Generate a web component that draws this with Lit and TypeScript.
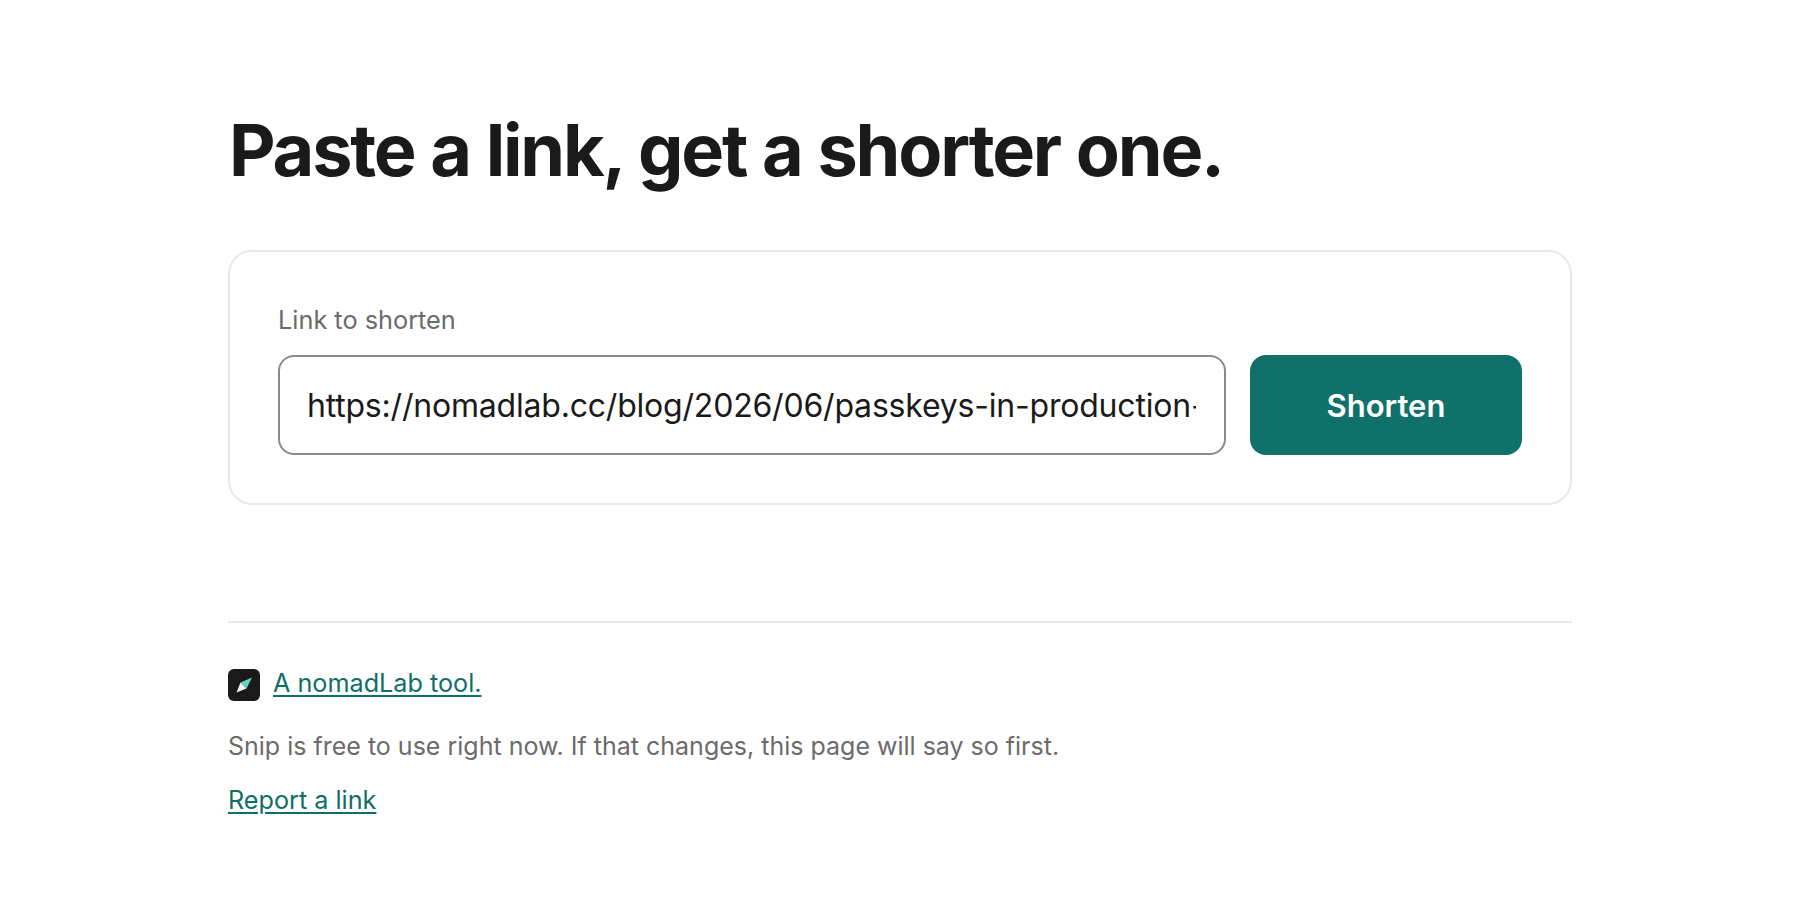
import { LitElement, html, css } from "lit";
import { customElement } from "lit/decorators.js";

@customElement("app-root")
export class AppRoot extends LitElement {
  static styles = css`
    :host { display: block; background: #fff; min-height: 920px; font-family: Inter, "Noto Sans", sans-serif; color: #1a1a1a; }
    .page { width: 1344px; margin: 0 auto; padding-top: 108px; box-sizing: border-box; }
    h1 { margin: 0 0 58px; font-size: 72px; line-height: 84px; font-weight: 700; letter-spacing: -2.2px; word-spacing: 1px; padding-left: 1px; color: #1a1a1a; }
    .card { border: 2px solid #e8e8e8; border-radius: 24px; padding: 48px; display: flex; flex-direction: column; gap: 16px; }
    label { font-size: 25.3px; line-height: 39px; color: #6b6b6b; }
    .row { display: flex; gap: 24px; }
    input { flex: 1; min-width: 0; height: 100px; box-sizing: border-box; border: 2px solid #8a8a8a; border-radius: 16px; padding: 0 28px 0 27px; font: 400 32px Inter, sans-serif; letter-spacing: -0.2px; color: #1a1a1a; background: #fff; outline: none; }
    button { width: 272px; height: 100px; border: 0; border-radius: 16px; background: #10716a; color: #fff; font: 600 31px Inter, sans-serif; }
    footer { margin-top: 116px; border-top: 2px solid #e8e8e8; padding-top: 44px; display: flex; flex-direction: column; }
    .brand { display: flex; align-items: center; gap: 13px; height: 32px; }
    .logo { width: 32px; height: 32px; display: block; margin-top: 4px; }
    a { color: #0f6e67; font-size: 25.2px; line-height: 32px; text-decoration: underline; text-decoration-thickness: 2px; text-underline-offset: 3px; }
    p { margin: 31px 0 22px; font-size: 25px; line-height: 32px; color: #6b6b6b; }
  `;
  render() {
    return html`<div class="page">
      <h1>Paste a link, get a shorter one.</h1>
      <div class="card">
        <label for="u">Link to shorten</label>
        <div class="row">
          <input id="u" type="text" .value=${"https://nomadlab.cc/blog/2026/06/passkeys-in-production-notes-from-the-field"} />
          <button>Shorten</button>
        </div>
      </div>
      <footer>
        <div class="brand">
          <svg class="logo" viewBox="0 0 32 32">
            <rect width="32" height="32" rx="6" fill="#1a1a1a"/>
            <path d="M24 8.5 L12.5 13.5 L18.5 19.5 Z" fill="#5fd6bd"/>
            <path d="M8.5 23.5 L12.5 13.5 L18.5 19.5 Z" fill="#f2f2f2"/>
          </svg>
          <a href="#">A nomadLab tool.</a>
        </div>
        <p>Snip is free to use right now. If that changes, this page will say so first.</p>
        <div><a href="#">Report a link</a></div>
      </footer>
    </div>`;
  }
}
